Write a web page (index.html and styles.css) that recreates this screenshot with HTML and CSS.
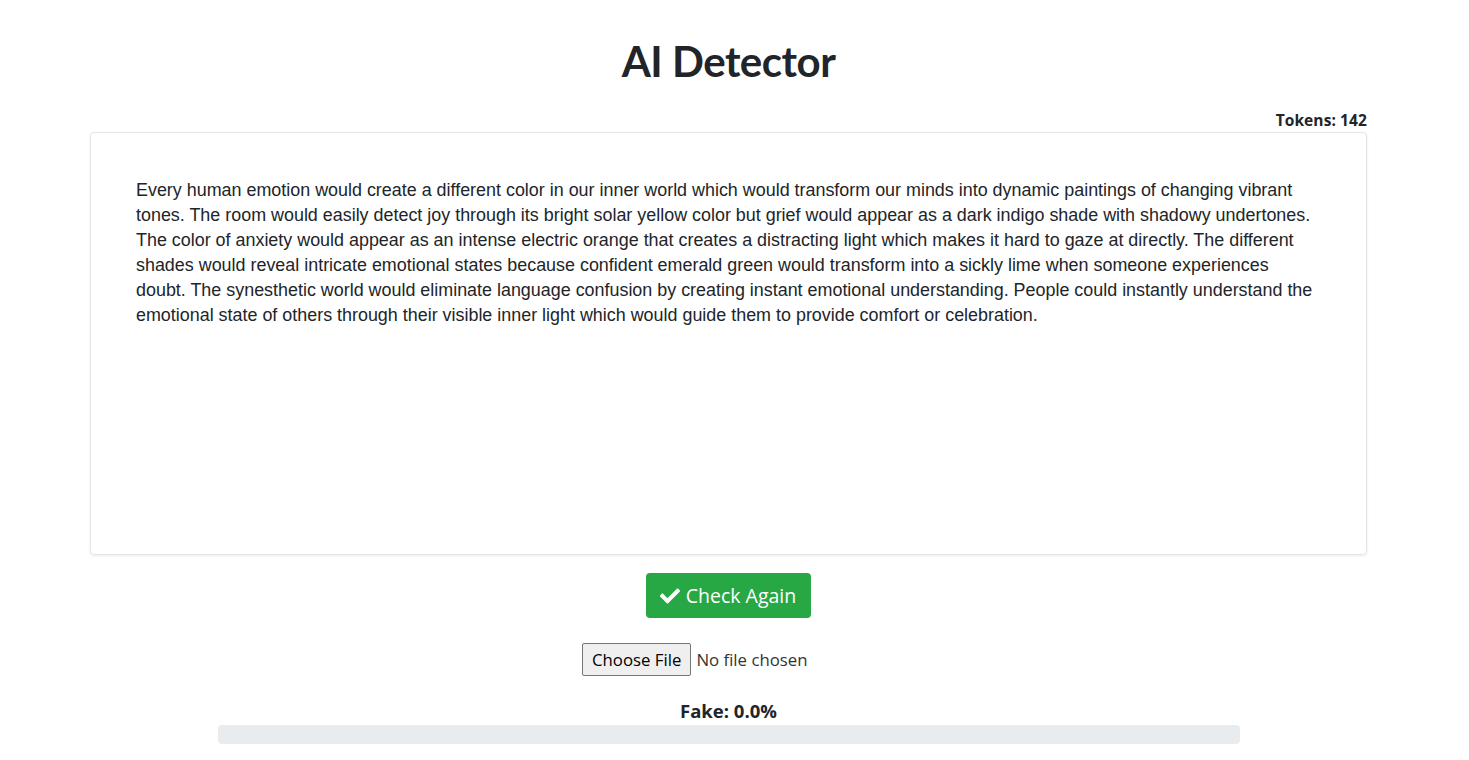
FILE: index.html
```html
<!DOCTYPE html>
<html>
<head>
<meta charset="utf-8">
<link rel="stylesheet" href="styles.css">
</head>
<body>
<div class="page">
  <h1 class="title">AI Detector</h1>
  <div class="container">
    <div class="tokens">Tokens: 142</div>
    <div class="card">
      <p class="text">Every human emotion would create a different color in our inner world which would transform our minds into dynamic paintings of changing vibrant tones. The room would easily detect joy through its bright solar yellow color but grief would appear as a dark indigo shade with shadowy undertones. The color of anxiety would appear as an intense electric orange that creates a distracting light which makes it hard to gaze at directly. The different shades would reveal intricate emotional states because confident emerald green would transform into a sickly lime when someone experiences doubt. The synesthetic world would eliminate language confusion by creating instant emotional understanding. People could instantly understand the emotional state of others through their visible inner light which would guide them to provide comfort or celebration.</p>
    </div>
    <div class="actions">
      <button class="btn-check"><svg class="check" viewBox="0 0 512 512" width="20" height="20"><path fill="#fff" d="M173.9 439.4l-166.4-166.4c-10-10-10-26.2 0-36.2l36.2-36.2c10-10 26.2-10 36.2 0L192 312.7 432.1 72.6c10-10 26.2-10 36.2 0l36.2 36.2c10 10 10 26.2 0 36.2l-294.4 294.4c-10 10-26.2 10-36.2 0z"/></svg>Check Again</button>
      <div class="file-row"><span class="file-btn">Choose File</span><span class="file-name">No file chosen</span></div>
      <div class="result">Fake: 0.0%</div>
      <div class="bar"></div>
    </div>
  </div>
</div>
</body>
</html>
```
FILE: styles.css
```css
html, body { margin: 0; padding: 0; background: #fff; }
body { font-family: "Open Sans", "Noto Sans", sans-serif; color: #212529; }
.page { width: 1457px; padding-top: 37px; }
.title {
  margin: 0;
  text-align: center;
  font-family: "Lato", "Noto Sans", sans-serif;
  font-weight: 700;
  font-size: 42px;
  line-height: 48px;
  letter-spacing: -0.5px;
  color: #212529;
}
.container { width: 1277px; margin: 0 auto; padding-top: 25px; display: flex; flex-direction: column; }
.tokens { text-align: right; font-weight: 700; font-size: 15.5px; line-height: 21px; letter-spacing: 0.1px; }
.card {
  margin-top: 1px;
  height: 423px;
  border: 1px solid #e3e5e8;
  border-radius: 4px;
  box-shadow: 0 1px 3px rgba(0,0,0,0.08);
  box-sizing: border-box;
  padding: 45px 45px;
}
.text {
  margin: 0;
  font-family: "Liberation Sans", Arial, sans-serif;
  font-size: 17.92px;
  line-height: 25px;
  color: #212529;
}
.actions { display: flex; flex-direction: column; align-items: center; }
.btn-check {
  margin-top: 18px;
  background: #28a745;
  color: #fff;
  border: none;
  border-radius: 4px;
  height: 45px;
  padding: 0 15px 0 14px;
  font-family: "Open Sans", "Noto Sans", sans-serif;
  font-size: 19.5px;
  display: flex;
  align-items: center;
  gap: 6px;
}
.check { display: block; }
.file-row {
  margin-top: 25px;
  width: 293px;
  display: flex;
  justify-content: flex-start;
  align-items: center;
  font-size: 16.8px;
  font-family: "Open Sans", "Noto Sans", sans-serif;
}
.file-btn {
  border: 1px solid #767676;
  background: #efefef;
  border-radius: 2px;
  height: 33px;
  box-sizing: border-box;
  padding: 0 9px;
  display: flex;
  align-items: center;
  color: #000;
}
.file-name { margin-left: 5px; color: #333; }
.result { margin-top: 23px; font-weight: 700; font-size: 18.5px; line-height: 24px; }
.bar { width: 1022px; height: 19px; background: #e9ecef; border-radius: 4px; margin-top: 2px; }
```
